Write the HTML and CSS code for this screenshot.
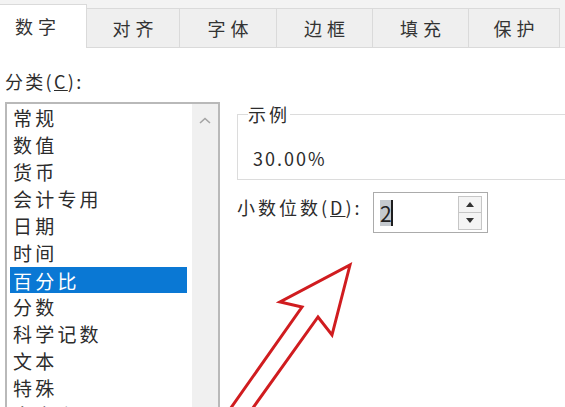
FILE: index.html
```html
<!DOCTYPE html>
<html lang="zh-CN">
<head>
<meta charset="utf-8">
<link rel="stylesheet" href="styles.css">
</head>
<body>
<div class="page">
  <div class="tabs">
    <div class="tab tab-active">数字</div>
    <div class="tab tab-w93">对齐</div>
    <div class="tab tab-w97">字体</div>
    <div class="tab tab-w96">边框</div>
    <div class="tab tab-w96">填充</div>
    <div class="tab tab-w91">保护</div>
  </div>
  <div class="main">
    <div class="left">
      <div class="cat-label">分类(<u>C</u>):</div>
      <div class="listbox">
        <ul class="items">
          <li>常规</li>
          <li>数值</li>
          <li>货币</li>
          <li>会计专用</li>
          <li>日期</li>
          <li>时间</li>
          <li class="selected">百分比</li>
          <li>分数</li>
          <li>科学记数</li>
          <li>文本</li>
          <li>特殊</li>
          <li>自定义</li>
        </ul>
        <div class="scrollbar">
          <svg class="chev" width="12" height="7" viewBox="0 0 12 7"><path d="M1 6 L6 1.5 L11 6" fill="none" stroke="#a4a4a4" stroke-width="1.6"/></svg>
        </div>
      </div>
    </div>
    <div class="right">
      <fieldset class="sample">
        <legend>示例</legend>
        <div class="sample-value">30.00%</div>
      </fieldset>
      <div class="dec-row">
        <div class="dec-label">小数位数(<u>D</u>):</div>
        <div class="spin">
          <span class="spin-field"><span class="sel">2</span></span>
          <div class="spin-btns">
            <div class="spin-btn"><svg width="8" height="5" viewBox="0 0 8 5"><path d="M0 5 L4 0 L8 5Z" fill="#333"/></svg></div>
            <div class="spin-btn"><svg width="8" height="5" viewBox="0 0 8 5"><path d="M0 0 L4 5 L8 0Z" fill="#333"/></svg></div>
          </div>
        </div>
      </div>
    </div>
  </div>
  <svg class="arrow" width="565" height="407" viewBox="0 0 565 407">
    <path d="M350 265 L332 335 L318 317 L250 412 L228 412 L302 307 L280 302 Z" fill="none" stroke="#d01c1f" stroke-width="3" stroke-linejoin="miter"/>
  </svg>
</div>
</body>
</html>
```
FILE: styles.css
```css
* { box-sizing: border-box; }
html, body { margin: 0; padding: 0; background: #fff; }
body { width: 565px; height: 407px; overflow: hidden; }
.page {
  position: relative;
  width: 565px;
  height: 407px;
  overflow: hidden;
  font-family: "Noto Sans CJK SC", "Noto Sans", sans-serif;
  color: #2c2c2c;
}
.tabs {
  display: flex;
  height: 48px;
  padding-top: 8px;
  background: #f3f3f3;
  border-bottom: 1px solid #e2e2e2;
}
.tab {
  height: 40px;
  border: 1px solid #dadada;
  border-left: none;
  background: #efefef;
  font-size: 18px;
  letter-spacing: 5px;
  padding-left: 5px;
  line-height: 38px;
  text-align: center;
  color: #333;
}
.tab-active {
  width: 87px;
  height: 44px;
  margin-top: -4px;
  padding-left: 0;
  padding-right: 10px;
  background: #fff;
  border-bottom: none;
  line-height: 42px;
  position: relative;
  z-index: 1;
}
.tab-w93 { width: 93px; }
.tab-w97 { width: 97px; }
.tab-w96 { width: 96px; }
.tab-w91 { width: 91px; }

.main {
  display: flex;
  align-items: flex-start;
  padding-left: 5px;
}
.left { width: 215px; flex: none; }
.cat-label {
  margin-top: 22px;
  height: 22px;
  line-height: 22px;
  font-size: 18px;
  letter-spacing: 2.3px;
}
.listbox {
  margin-top: 10px;
  height: 330px;
  border: 2px solid #b9b9b9;
  display: flex;
}
.items {
  list-style: none;
  margin: 0;
  padding: 0 5px 0 3px;
  flex: 1;
}
.items li {
  height: 27px;
  line-height: 27px;
  padding-left: 3px;
  font-size: 19px;
  letter-spacing: 3.2px;
  white-space: nowrap;
}
.items li.selected {
  background: #0a78d4;
  color: #fff;
  height: 26px;
  margin-top: 1px;
}
.scrollbar {
  width: 26px;
  flex: none;
  background: #f0f0f0;
  display: flex;
  justify-content: center;
  padding-top: 13px;
}
.chev { display: block; }

.right {
  flex: none;
  width: 420px;
  margin-left: 17px;
  padding-top: 56px;
}
.sample {
  margin: 0;
  padding: 0 0 9px 10px;
  border: 1px solid #dcdcdc;
  min-width: 0;
}
.sample legend {
  padding: 0;
  height: 20px;
  line-height: 20px;
  font-size: 18px;
  letter-spacing: 3px;
}
.sample-value {
  margin-top: 22px;
  padding-left: 5px;
  height: 24px;
  line-height: 24px;
  font-size: 18px;
  letter-spacing: 2px;
}
.dec-row {
  display: flex;
  align-items: flex-start;
  margin-top: 12px;
}
.dec-label {
  width: 136px;
  flex: none;
  margin-top: 3px;
  height: 24px;
  line-height: 24px;
  font-size: 18px;
  letter-spacing: 3px;
  white-space: nowrap;
}
.spin {
  width: 115px;
  height: 41px;
  border: 1px solid #ababab;
  background: #fff;
  display: flex;
  align-items: center;
  padding: 0 5px 0 6px;
}
.spin-field { flex: 1; display: flex; align-items: center; }
.sel {
  display: inline-block;
  width: 13px;
  height: 26px;
  line-height: 26px;
  background: #c4c9ce;
  border-right: 2px solid #1e1e1e;
  font-size: 21px;
  color: #222;
}
.spin-btns {
  width: 24px;
  display: flex;
  flex-direction: column;
}
.spin-btn {
  height: 17px;
  border: 1px solid #c6c6c6;
  background: #f4f4f4;
  display: flex;
  align-items: center;
  justify-content: center;
}
.spin-btn + .spin-btn { border-top: none; }
.spin-btn svg { display: block; }

.arrow {
  position: absolute;
  left: 0;
  top: 0;
  pointer-events: none;
}
```
